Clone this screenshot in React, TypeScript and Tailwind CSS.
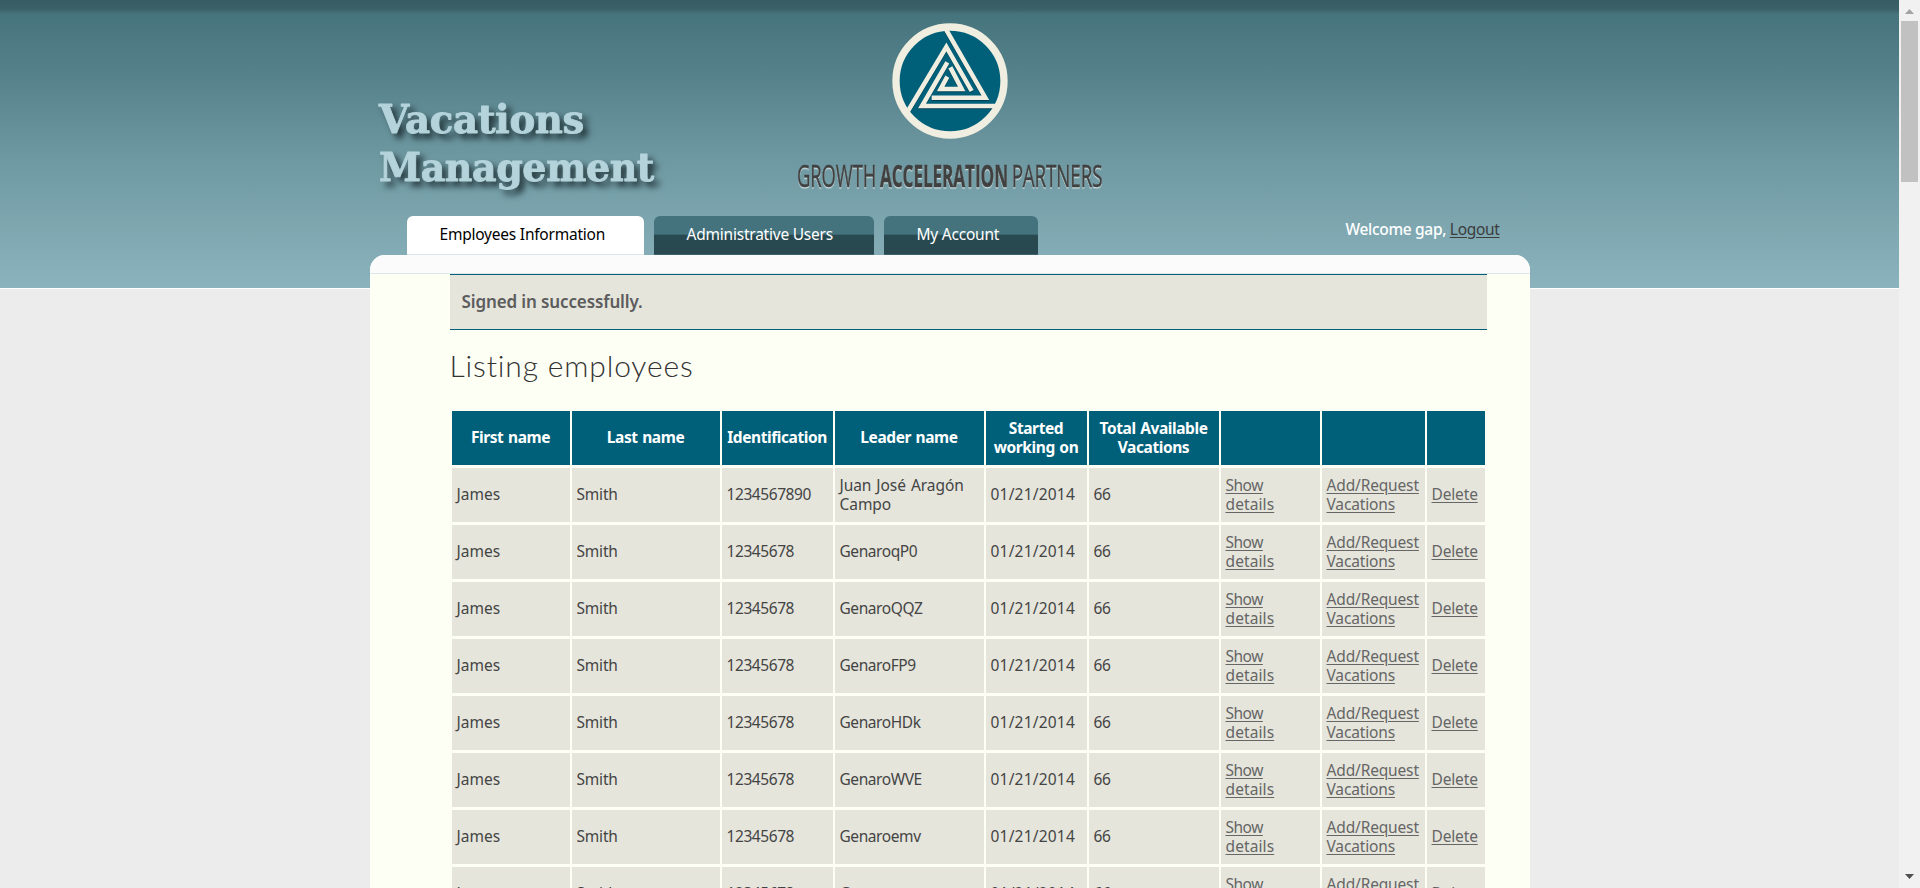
import React from "react";

const leaders = [
  "Juan José Aragón Campo",
  "GenaroqP0",
  "GenaroQQZ",
  "GenaroFP9",
  "GenaroHDk",
  "GenaroWVE",
  "Genaroemv",
  "Genaro",
];

const columns =
  "grid grid-cols-[118px_148px_111px_149px_101px_130px_99px_103px_58px] gap-x-[2px]";

const headings = [
  "First name",
  "Last name",
  "Identification",
  "Leader name",
  "Started working on",
  "Total Available Vacations",
  "",
  "",
  "",
];

function Wordmark() {
  return (
    <svg className="block h-[120px] w-[300px] overflow-visible" viewBox="0 0 300 120">
      <g
        fill="#b4d3db"
        stroke="#b4d3db"
        strokeWidth="0.9"
        strokeLinejoin="round"
        fontFamily="'DejaVu Serif', serif"
        fontWeight="bold"
        fontSize="39"
        style={{ filter: "drop-shadow(5px 5px 3px rgba(25,40,45,.85))" }}
      >
        <text x="0" y="41" textLength="205" lengthAdjust="spacingAndGlyphs">
          Vacations
        </text>
        <text x="0" y="89" textLength="275" lengthAdjust="spacingAndGlyphs">
          Management
        </text>
      </g>
    </svg>
  );
}

function CompanyLogo() {
  return (
    <svg className="block h-[190px] w-[340px] overflow-visible" viewBox="0 0 1020 570">
      <circle cx="510" cy="213" r="162" fill="#00607a" />
      <g
        fill="none"
        stroke="#efeee0"
        strokeWidth="13.5"
        strokeMiterlimit="10"
        style={{ filter: "drop-shadow(0 3px 2px rgba(0,20,30,.4))" }}
      >
        <path d="M498 58 L616 263 L455 263" />
        <path d="M648 288 L426 288 L502 157" />
        <path d="M384 303 L499 111 L575 243" />
        <path d="M511 172 L545 237 L482 237 L502 200" />
      </g>
      <circle cx="510" cy="213" r="162" fill="none" stroke="#efeee0" strokeWidth="22" />
      <g
        fontFamily="'Open Sans', sans-serif"
        fontSize="92"
        fill="#404040"
        stroke="#404040"
        strokeWidth="1.5"
        style={{ filter: "drop-shadow(0 4px 0 rgba(240,250,250,.7))" }}
      >
        <text x="51" y="532" textLength="238" lengthAdjust="spacingAndGlyphs">
          GROWTH
        </text>
        <text x="300" y="532" fontWeight="bold" textLength="384" lengthAdjust="spacingAndGlyphs">
          ACCELERATION
        </text>
        <text x="695" y="532" textLength="272" lengthAdjust="spacingAndGlyphs">
          PARTNERS
        </text>
      </g>
    </svg>
  );
}

function Row({ leader, index }: { leader: string; index: number }) {
  const cell = "flex items-center bg-[#e5e5dc] px-[5px]";
  const single = `${cell} pb-[1px]`;
  const link = "text-[#666] underline underline-offset-2 tracking-[-0.15px]";
  return (
    <div className={`${columns} h-[54px]`}>
      <div className={`${single} tracking-[0px]`}>James</div>
      <div className={`${single} tracking-[-0.2px]`}>Smith</div>
      <div className={single}>{index === 0 ? "1234567890" : "12345678"}</div>
      <div className={index === 0 ? `${cell} tracking-[-0.05px] [word-spacing:1px]` : single}>{leader}</div>
      <div className={`${single} tracking-[0.2px]`}>
        01/21/2014
      </div>
      <div className={single}>66</div>
      <div className={cell}>
        <a className={link}>
          <span className="tracking-[-0.5px]">Show</span>
          <br />
          <span className="tracking-[0.1px]">details</span>
        </a>
      </div>
      <div className={cell}>
        <a className={link}>
          Add/Request
          <br />
          Vacations
        </a>
      </div>
      <div className={single}>
        <a className={link}>Delete</a>
      </div>
    </div>
  );
}

export default function App() {
  const tab =
    "flex h-[39px] items-start rounded-t-[6px] border-b pt-[8px] pl-[33px] leading-[20px] tracking-[-0.22px] whitespace-nowrap";
  const darkTab =
    "border-[#3c626b] bg-[linear-gradient(#44737d_0_18px,#3b666f_18px_19px,#284950_19px)] text-white";
  return (
    <div className="flex h-[888px] w-[1920px] overflow-hidden bg-[#ececec] font-['Noto_Sans',sans-serif] text-[15.5px] leading-[19px] tracking-[-0.42px] text-[#444]">
      <div className="h-full w-[1899px] bg-[linear-gradient(#375c64_0,#3a6068_9px,#46747d_14px,#548089_70px,#6f99a2_160px,#8bb3bd_288px,#ffffff_288px,#ffffff_289px,#ececec_289px)]">
        <div className="mx-auto w-[1160px]">
          <header className="flex h-[216px] pl-[9px]">
            <div className="w-[401px] pt-[92px]">
              <Wordmark />
            </div>
            <div className="pt-[10px]">
              <CompanyLogo />
            </div>
          </header>
          <nav className="flex h-[39px] gap-[10px] pr-[30px] pl-[37px]">
            <a className={`${tab} w-[237px] border-[#dde5e8] bg-white text-black`}>Employees Information</a>
            <a className={`${tab} ${darkTab} w-[220px]`}>Administrative Users</a>
            <a className={`${tab} ${darkTab} w-[154px]`}>My Account</a>
            <div className="ml-auto pt-[3px] leading-[20px] tracking-[-0.32px] whitespace-nowrap text-[#3c3c3c]">
              <span className="font-medium text-white">Welcome gap,</span>{" "}
              <a className="underline underline-offset-2">Logout</a>
            </div>
          </nav>
          <main className="h-[633px] overflow-hidden rounded-t-[15px] bg-[#fdfff5]">
            <div className="h-[19px] border-b border-[#dde8ea] bg-[#fbfbfb]" />
            <div className="pr-[43px] pl-[80px]">
              <div className="flex h-[56px] items-center border-y border-[#00607a] bg-[#e5e5dc] px-[12px] pb-[2px] text-[17px] font-semibold tracking-[-0.12px] text-[#5c5c5c]">
                Signed in successfully.
              </div>
              <h1 className="mt-[15px] h-[66px] font-['Lato',sans-serif] text-[30px] leading-[40px] font-light tracking-[0.85px] text-[#333]">
                Listing employees
              </h1>
              <div className="flex flex-col gap-[3px] pl-[2px]">
                <div className={`${columns} h-[54px] text-center font-bold text-white [word-spacing:1px]`}>
                  {headings.map((h, i) => (
                    <div key={i} className="flex items-center justify-center bg-[#00607a] px-[4px] pb-[1px]">
                      {h}
                    </div>
                  ))}
                </div>
                {leaders.map((l, i) => (
                  <Row key={l} leader={l} index={i} />
                ))}
              </div>
            </div>
          </main>
        </div>
      </div>
      <div className="flex h-full w-[21px] flex-col items-center justify-between bg-[#f1f1f1]">
        <div className="flex flex-col items-center">
          <svg className="h-[21px] w-[17px]" viewBox="0 0 17 21">
            <path d="M4 14 L8.5 9 L13 14 Z" fill="#a3a3a3" />
          </svg>
          <div className="h-[161px] w-[17px] bg-[#c1c1c1]" />
        </div>
        <svg className="h-[21px] w-[17px]" viewBox="0 0 17 21">
          <path d="M4 7 L13 7 L8.5 12 Z" fill="#505050" />
        </svg>
      </div>
    </div>
  );
}
